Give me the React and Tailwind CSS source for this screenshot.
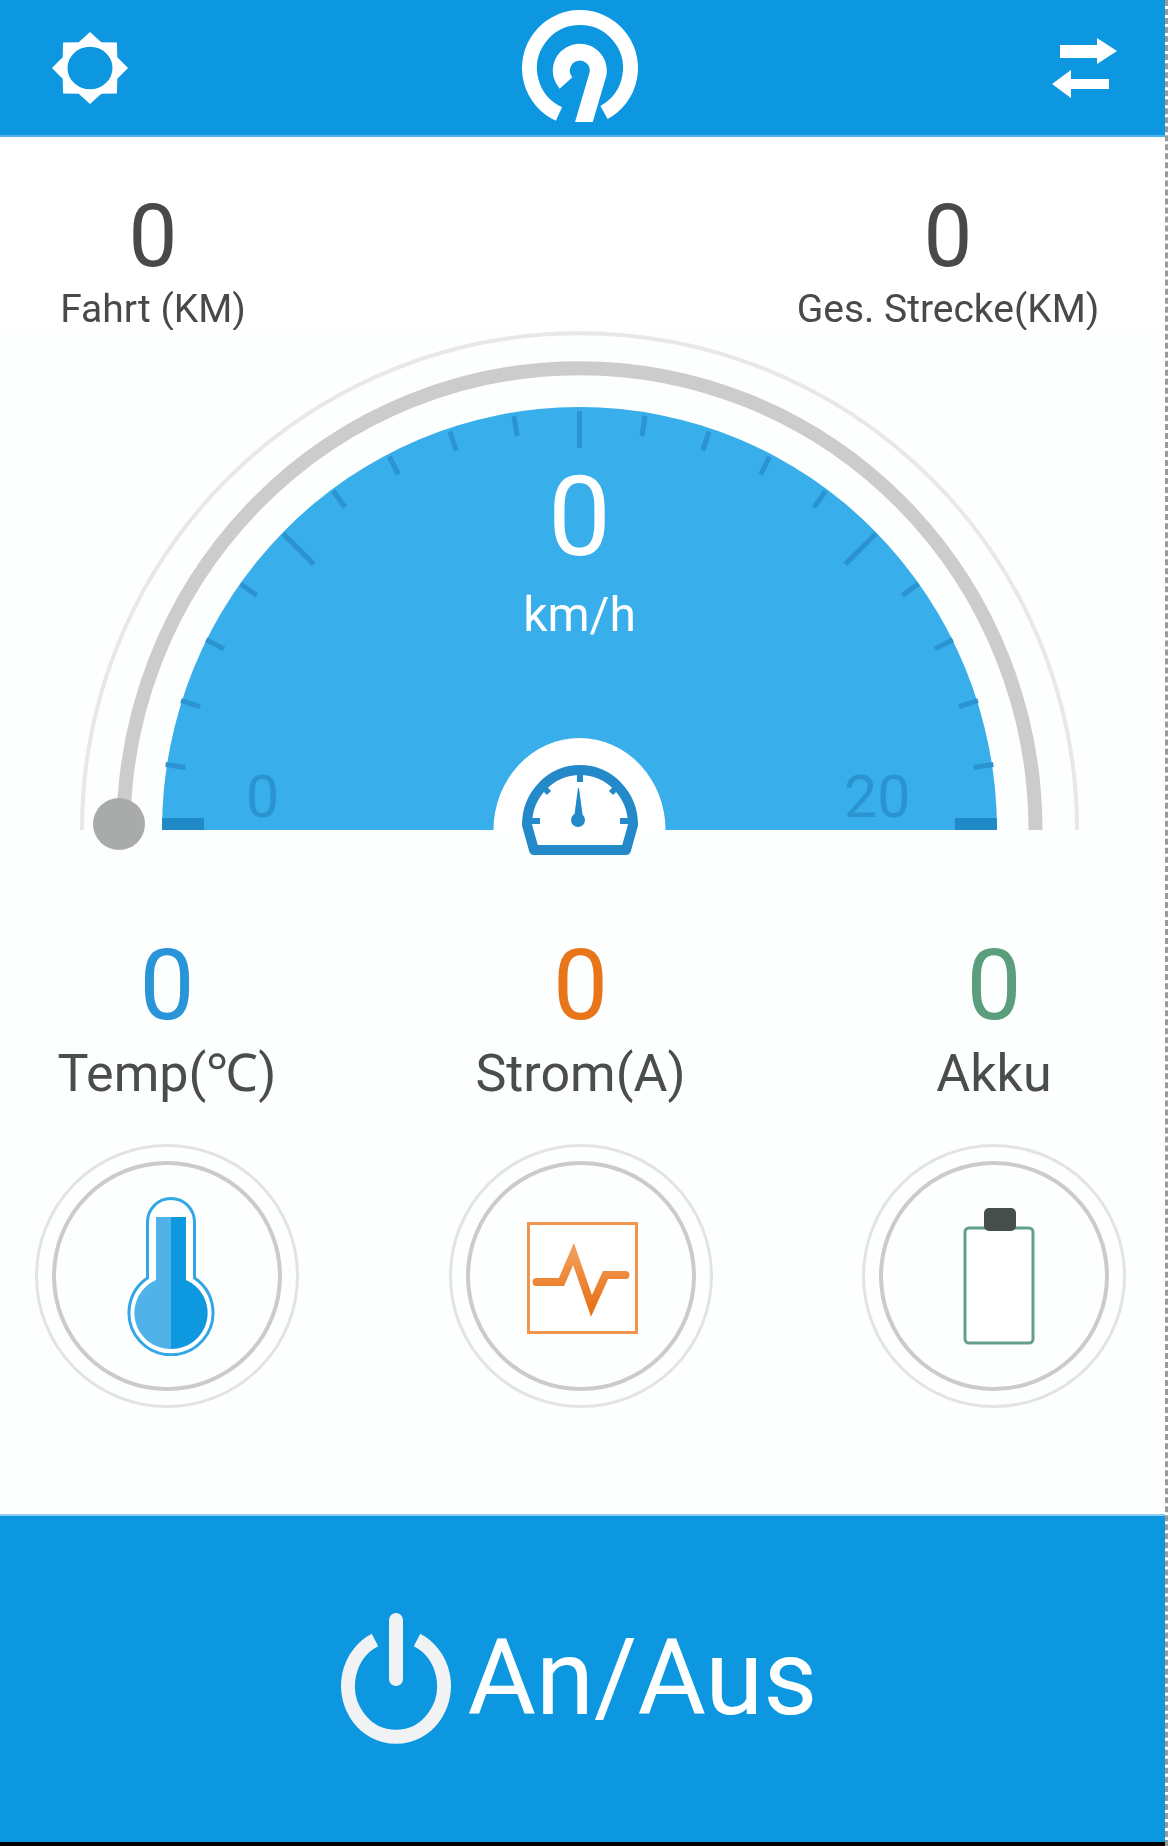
import React from 'react';

const TICK_ANGLES = [-81, -72, -63, -54, -45, -36, -27, -18, -9, 0, 9, 18, 27, 36, 45, 54, 63, 72, 81];

function polar(cx, cy, r, deg) {
    const rad = (deg * Math.PI) / 180;
    return [cx + r * Math.sin(rad), cy - r * Math.cos(rad)];
}

function SunIcon() {
    const points = [];
    for (let i = 0; i < 16; i++) {
        const [x, y] = polar(38, 38, i % 2 === 0 ? 38 : 29.5, i * 22.5);
        points.push(`${x.toFixed(1)},${y.toFixed(1)}`);
    }
    return (
        <svg width="76" height="72" viewBox="0 0 76 76" preserveAspectRatio="none">
            <polygon points={points.join(' ')} fill="#ffffff" />
            <circle cx="38" cy="38" r="22.5" fill="#0c97e0" />
        </svg>
    );
}

function Logo() {
    return (
        <svg width="120" height="114" viewBox="520 8 120 114">
            <path d="M559 114 A50.5 50.5 0 1 1 604 112.5" fill="none" stroke="#ffffff" strokeWidth="15" />
            <path d="M566 83 A18.5 18.5 0 1 1 598 74 L583 125" fill="none" stroke="#ffffff" strokeWidth="17" />
        </svg>
    );
}

function SwapIcon() {
    return (
        <svg width="68" height="62" viewBox="1051 36 68 62">
            <polygon points="1060,44 1097,44 1097,37 1117,50 1097,63 1097,57 1060,57" fill="#ffffff" />
            <polygon points="1109,78 1071,78 1071,69 1052,83 1071,97 1071,88 1109,88" fill="#ffffff" />
        </svg>
    );
}

function Dial() {
    return (
        <svg width="1165" height="560" viewBox="0 330 1165 560" className="block">
            <path d="M82 830 A497.5 497 0 0 1 1077 830" fill="none" stroke="#e8e8e8" strokeWidth="4" />
            <path d="M123.5 830 A456 462 0 0 1 1035.5 830" fill="none" stroke="#cdcccd" strokeWidth="14" />
            <path d="M162 830 A417.5 423 0 0 1 997 830 Z" fill="#38aeea" />
            {TICK_ANGLES.map(angle => {
                const long = angle % 45 === 0;
                const [x1, y1] = polar(579.5, 830, 419, angle);
                const [x2, y2] = polar(579.5, 830, long ? (angle === 0 ? 382 : 376) : 399, angle);
                return (
                    <line key={angle} x1={x1} y1={y1} x2={x2} y2={y2} stroke="#2b93d0" strokeWidth="5" />
                );
            })}
            <rect x="162" y="818" width="42" height="12" fill="#2089c8" />
            <rect x="955" y="818" width="42" height="12" fill="#2089c8" />
            <path d="M493.5 830 A86 92 0 0 1 665.5 830 Z" fill="#ffffff" />
            <path d="M527 825 A53 55 0 0 1 633 825 L626 850 H534 Z" fill="#ffffff" stroke="#2389c9" strokeWidth="10" strokeLinejoin="round" />
            <path d="M580 768 V782 M541 785 L549 793 M619 785 L611 793 M524 821 H540 M636 821 H620" stroke="#2389c9" strokeWidth="6" />
            <polygon points="578,788 579,788 583,818 574,818" fill="#2389c9" />
            <circle cx="578" cy="820" r="7" fill="#2389c9" />
            <circle cx="119" cy="824" r="26" fill="#a9abaa" />
        </svg>
    );
}

function ThermometerIcon() {
    return (
        <svg width="100" height="160" viewBox="117 1196 100 160">
            <path d="M147.5 1222 A23.5 23.5 0 0 1 194.5 1222 V1278 A42 42 0 1 1 147.5 1278 Z" fill="#ffffff" stroke="#33a7e6" strokeWidth="3" />
            <path d="M171 1217 H156 V1280 A36 36 0 0 0 171 1349 Z" fill="#4fb2e8" />
            <path d="M171 1217 H186 V1280 A36 36 0 0 1 171 1349 Z" fill="#0d98e0" />
        </svg>
    );
}

function CurrentIcon() {
    return (
        <svg width="120" height="120" viewBox="520.5 1216 120 120">
            <defs>
                <linearGradient id="wave" x1="0" y1="0" x2="0" y2="1">
                    <stop offset="0" stopColor="#f29a55" />
                    <stop offset="1" stopColor="#e8741a" />
                </linearGradient>
            </defs>
            <rect x="528" y="1223.5" width="108" height="109" fill="#ffffff" stroke="#f09550" strokeWidth="3" />
            <path d="M536 1282 H561 L573 1254 L591 1306 L605 1275 H625" fill="none" stroke="url(#wave)" strokeWidth="8" strokeLinecap="round" />
        </svg>
    );
}

function BatteryIcon() {
    return (
        <svg width="100" height="160" viewBox="944 1196 100 160">
            <rect x="965" y="1228" width="68" height="115" rx="4" fill="#ffffff" stroke="#649f8c" strokeWidth="3" />
            <rect x="984" y="1208" width="32" height="23" rx="5" fill="#474f4c" />
        </svg>
    );
}

function RoundIcon({children}) {
    return (
        <div className="w-[264px] h-[264px] rounded-full border-[3px] border-[#e2e3e3] flex items-center justify-center">
            <div className="w-[230px] h-[230px] rounded-full border-4 border-[#cbcbcb] flex items-center justify-center">
                {children}
            </div>
        </div>
    );
}

function Stat({value, label, color, children}) {
    return (
        <div className="flex flex-col items-center w-[264px]">
            <div className={`text-[98px] leading-[100px] ${color}`}>{value}</div>
            <div className="text-[52px] leading-[64px] mt-[6px] text-[#4a4c4d] whitespace-nowrap">{label}</div>
            <div className="mt-[38px]">
                <RoundIcon>{children}</RoundIcon>
            </div>
        </div>
    );
}

export default function App() {
    return (
        <div className="w-[1168px] h-[1846px] flex bg-white font-['Roboto',sans-serif] overflow-hidden blur-[0.6px]">
            <div className="w-[1165px] flex flex-col">
                <header className="h-[137px] bg-[#0c97e0] border-b-2 border-[#4db3ea] flex items-center justify-between pl-[52px] pr-[46px]">
                    <SunIcon />
                    <div className="mr-[19px] mb-[5px]">
                        <Logo />
                    </div>
                    <SwapIcon />
                </header>

                <div className="flex justify-between h-[193px] pt-[54px] text-[#47494a]">
                    <div className="w-[306px] flex flex-col items-center">
                        <div className="text-[87px] leading-[90px]">0</div>
                        <div className="text-[39px] leading-[46px] mt-[5px] whitespace-nowrap">Fahrt (KM)</div>
                    </div>
                    <div className="w-[434px] flex flex-col items-center">
                        <div className="text-[87px] leading-[90px]">0</div>
                        <div className="text-[39px] leading-[46px] mt-[5px] whitespace-nowrap">Ges. Strecke(KM)</div>
                    </div>
                </div>

                <div className="relative h-[560px] bg-[#fdfefe]">
                    <Dial />
                    <div className="absolute left-0 right-[6px] top-[132px] flex flex-col items-center text-white">
                        <div className="text-[112px] leading-[110px]">0</div>
                        <div className="text-[48px] leading-[52px] mt-[17px]">km/h</div>
                    </div>
                    <div className="absolute left-[246px] top-[433px] text-[59px] leading-[68px] text-[#2b93d0]">0</div>
                    <div className="absolute left-[844px] top-[433px] text-[59px] leading-[68px] text-[#2b93d0]">20</div>
                </div>

                <div className="flex justify-between pl-[35px] pr-[39px] pt-[46px] bg-[#fdfefe] flex-1">
                    <Stat value="0" label="Temp(℃)" color="text-[#2a94d8]"><ThermometerIcon /></Stat>
                    <Stat value="0" label="Strom(A)" color="text-[#e8751a]"><CurrentIcon /></Stat>
                    <Stat value="0" label="Akku" color="text-[#5a9e7e]"><BatteryIcon /></Stat>
                </div>

                <footer className="h-[328px] bg-[#0c97e0] border-t-2 border-[#8fcdf0] flex items-center justify-center gap-[16px] pr-[8px]">
                    <svg width="112" height="134" viewBox="342 1612 112 134">
                        <path d="M377 1640 A48 51 0 1 0 419 1640" fill="none" stroke="#f0f2f4" strokeWidth="14" />
                        <path d="M398 1620 V1679" fill="none" stroke="#f0f2f4" strokeWidth="14" strokeLinecap="round" />
                    </svg>
                    <span className="text-[105px] leading-[120px] text-white">An/Aus</span>
                </footer>
                <div className="h-[4px] bg-black" />
            </div>
            <div className="w-[3px] border-r-[3px] border-dashed border-[#9a9a9a]" />
        </div>
    );
}
